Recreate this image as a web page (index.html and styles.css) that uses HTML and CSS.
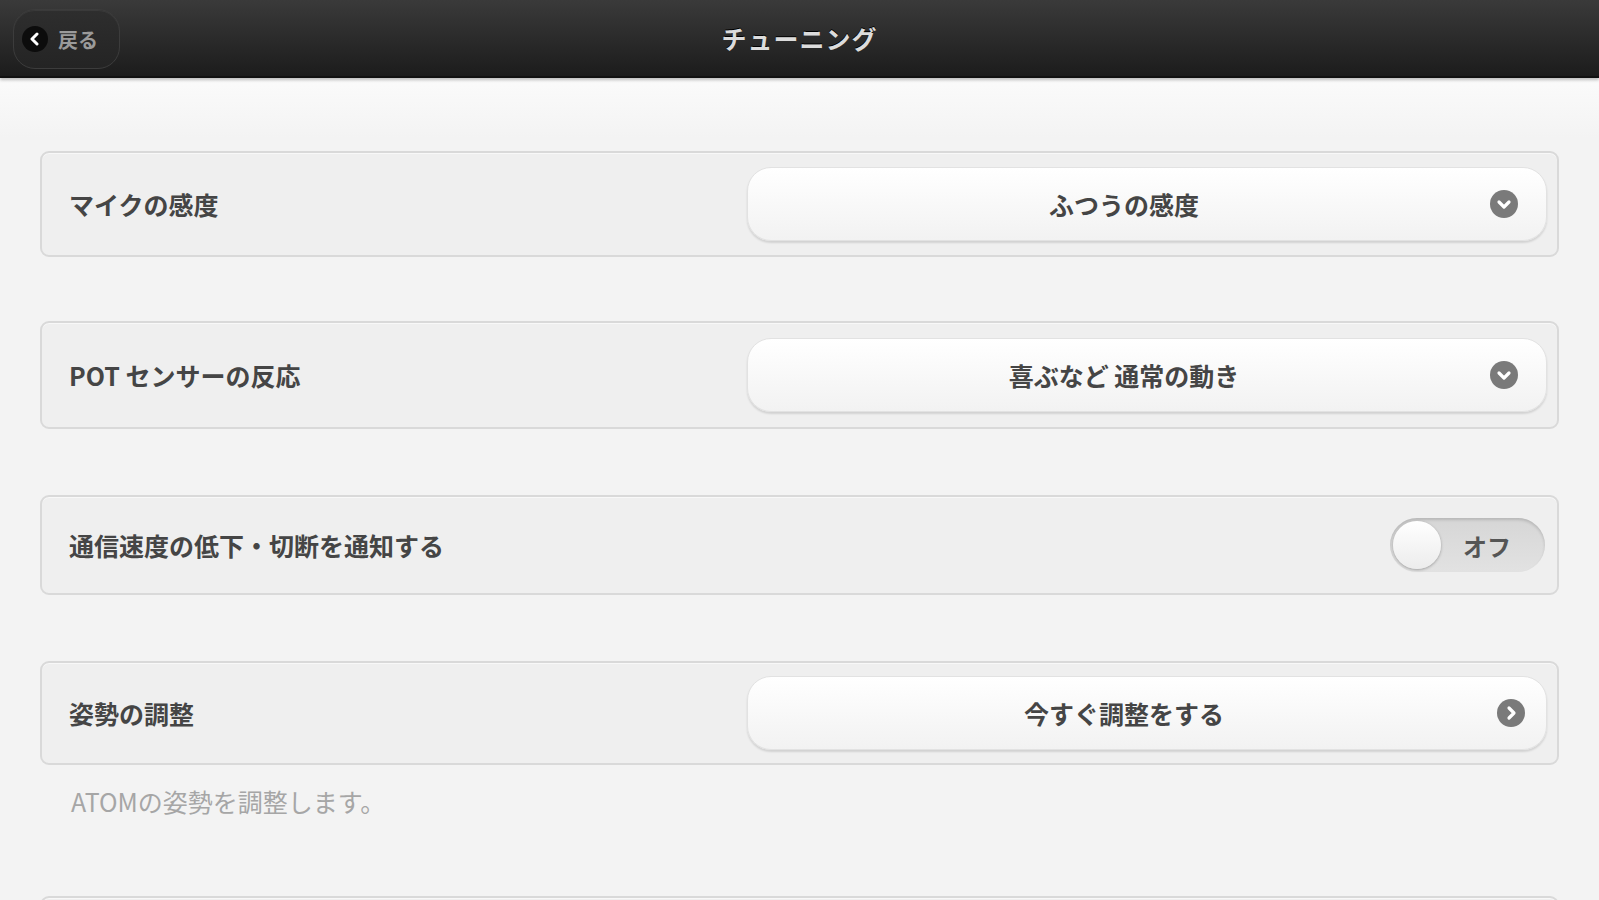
FILE: index.html
```html
<!DOCTYPE html>
<html>

<head>
  <title>チューニング</title>
  <link rel="stylesheet" href="styles.css">
</head>

<body>

  <div class="header">
    <button class="btn-back">
      <span class="back-icon">
        <svg width="14" height="14" viewBox="0 0 14 14"><path d="M9 2 L4 7 L9 12" fill="none" stroke="#fff" stroke-width="3" stroke-linecap="round" stroke-linejoin="round"/></svg>
      </span>
      戻る
    </button>
    <h1 class="title">チューニング</h1>
  </div>

  <div class="content">

    <div class="card card-first">
      <div class="card-label">マイクの感度</div>
      <button class="btn-select">
        ふつうの感度
        <span class="select-icon">
          <svg width="30" height="30" viewBox="0 0 30 30"><circle cx="15" cy="15" r="14" fill="#7a7a7a"/><path d="M10 13 L15 18 L20 13" fill="none" stroke="#fff" stroke-width="3.2" stroke-linecap="round" stroke-linejoin="round"/></svg>
        </span>
      </button>
    </div>

    <div class="card card-tall">
      <div class="card-label">POT センサーの反応</div>
      <button class="btn-select">
        喜ぶなど 通常の動き
        <span class="select-icon">
          <svg width="30" height="30" viewBox="0 0 30 30"><circle cx="15" cy="15" r="14" fill="#7a7a7a"/><path d="M10 13 L15 18 L20 13" fill="none" stroke="#fff" stroke-width="3.2" stroke-linecap="round" stroke-linejoin="round"/></svg>
        </span>
      </button>
    </div>

    <div class="card card-toggle">
      <div class="card-label">通信速度の低下・切断を通知する</div>
      <div class="toggle">
        <span class="toggle-knob"></span>
        <span class="toggle-text">オフ</span>
      </div>
    </div>

    <div class="card card-link">
      <div class="card-label">姿勢の調整</div>
      <button class="btn-select">
        今すぐ調整をする
        <span class="select-icon icon-next">
          <svg width="30" height="30" viewBox="0 0 30 30"><circle cx="15" cy="15" r="14" fill="#7a7a7a"/><path d="M13 10 L18 15 L13 20" fill="none" stroke="#fff" stroke-width="3.2" stroke-linecap="round" stroke-linejoin="round"/></svg>
        </span>
      </button>
    </div>
    <p class="help">ATOMの姿勢を調整します。</p>

    <div class="card card-next"></div>

  </div>

</body>

</html>
```

FILE: styles.css
```css
body{
  margin: 0;
  background-color: #f3f3f3;
  font-family: "Noto Sans CJK JP", "Liberation Sans", sans-serif;
  overflow: hidden;
  height: 900px;
}

.header{
  height: 76px;
  background: linear-gradient(#3a3a3a, #1c1c1c);
  border-bottom: 2px solid #111;
  box-shadow: 0 2px 3px rgba(0,0,0,0.25);
  display: flex;
  align-items: center;
  justify-content: center;
  position: relative;
}

.title{
  margin: 0;
  font-size: 25px;
  font-weight: bold;
  color: #dcdcdc;
  text-shadow: 0 -1px 0 #000;
  letter-spacing: 1px;
}

.btn-back{
  position: absolute;
  left: 13px;
  top: 9px;
  width: 107px;
  height: 60px;
  border-radius: 22px;
  border: 1px solid #3c3c3c;
  background: linear-gradient(#2e2e2e, #242424);
  box-shadow: inset 0 1px 0 rgba(255,255,255,0.06);
  display: flex;
  align-items: center;
  gap: 10px;
  padding: 0 0 0 8px;
  font-family: inherit;
  font-size: 20px;
  font-weight: bold;
  color: #9a9a9a;
  cursor: pointer;
}

.back-icon{
  width: 26px;
  height: 26px;
  border-radius: 50%;
  background-color: #0c0c0c;
  display: flex;
  align-items: center;
  justify-content: center;
}

.content{
  height: 822px;
  box-sizing: border-box;
  padding: 73px 40px 0 40px;
  background: linear-gradient(#fbfbfb, #f3f3f3 60px);
  overflow: hidden;
}

.card{
  height: 106px;
  box-sizing: border-box;
  border: 2px solid #d9d9d9;
  border-radius: 9px;
  background-color: #efefef;
  box-shadow: inset 0 1px 0 #f8f8f8;
  display: flex;
  align-items: center;
  justify-content: space-between;
  padding: 0 10px 0 27px;
  margin-bottom: 66px;
  flex-shrink: 0;
}

.card-first{
  margin-bottom: 64px;
}

.card-tall{
  height: 108px;
}

.card-toggle{
  height: 100px;
  padding-right: 12px;
}

.card-link{
  height: 104px;
}

.card-label{
  font-size: 25px;
  font-weight: bold;
  color: #454545;
}

.btn-select{
  width: 800px;
  height: 74px;
  border: 1px solid #e2e2e2;
  border-radius: 24px;
  background: linear-gradient(#ffffff, #f2f2f2);
  box-shadow: 0 2px 2px rgba(0,0,0,0.12);
  font-family: inherit;
  font-size: 25px;
  font-weight: bold;
  color: #454545;
  padding: 0 46px 0 0;
  position: relative;
  cursor: pointer;
}

.select-icon{
  position: absolute;
  right: 27px;
  top: 21px;
  width: 30px;
  height: 30px;
}

.icon-next{
  right: 20px;
}

.toggle{
  width: 155px;
  height: 54px;
  box-sizing: border-box;
  border-radius: 27px;
  background: linear-gradient(#d6d6d6, #e2e2e2);
  box-shadow: inset 0 2px 3px rgba(0,0,0,0.15);
  display: flex;
  align-items: center;
  padding-left: 3px;
}

.toggle-knob{
  width: 48px;
  height: 48px;
  border-radius: 50%;
  background: linear-gradient(#ffffff, #ececec);
  box-shadow: 0 1px 3px rgba(0,0,0,0.3);
}

.toggle-text{
  flex: 1;
  text-align: center;
  font-size: 24px;
  font-weight: bold;
  color: #555;
  padding-right: 12px;
}

.help{
  margin: -48px 0 0 31px;
  height: 113px;
  font-size: 25px;
  color: #a6a6a6;
}
```
